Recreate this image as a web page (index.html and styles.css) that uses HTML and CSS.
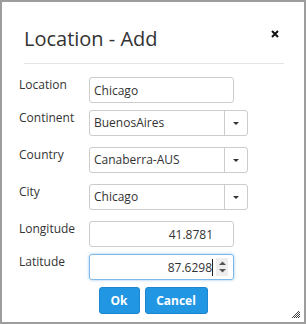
FILE: index.html
```html
<!DOCTYPE html>
<html lang="en">
<head>
<meta charset="UTF-8">
<title>Location - Add</title>
<link rel="stylesheet" href="styles.css">
</head>
<body>

<div class="dialog">
    <div class="dialog-header">
        <div class="dialog-title">Location - Add</div>
        <svg class="close" width="8" height="8" viewBox="0 0 8 8">
            <path d="M1 1 L7 7 M7 1 L1 7" stroke="#111" stroke-width="2"/>
        </svg>
    </div>

    <div class="rows">
        <div class="row">
            <label>Location</label>
            <input class="field" type="text" value="Chicago">
        </div>
        <div class="row row-select">
            <label>Continent</label>
            <div class="combo"><span class="combo-text">BuenosAires</span><span class="combo-btn"><span class="arrow"></span></span></div>
        </div>
        <div class="row row-select">
            <label>Country</label>
            <div class="combo"><span class="combo-text">Canaberra-AUS</span><span class="combo-btn"><span class="arrow"></span></span></div>
        </div>
        <div class="row row-select">
            <label>City</label>
            <div class="combo"><span class="combo-text">Chicago</span><span class="combo-btn"><span class="arrow"></span></span></div>
        </div>
        <div class="row">
            <label>Longitude</label>
            <div class="num"><span class="num-value">41.8781</span></div>
        </div>
        <div class="row">
            <label>Latitude</label>
            <div class="num focus"><span class="num-value">87.6298</span><span class="caret"></span>
                <span class="spinner">
                    <svg width="11" height="16" viewBox="0 0 11 16">
                        <path d="M2 6 L5.5 2.5 L9 6 Z" fill="#555"/>
                        <path d="M2 10 L5.5 13.5 L9 10 Z" fill="#555"/>
                    </svg>
                </span>
            </div>
        </div>
    </div>

    <div class="buttons">
        <button class="btn btn-ok">Ok</button>
        <button class="btn btn-cancel">Cancel</button>
    </div>

    <svg class="grip" width="8" height="8" viewBox="0 0 8 8">
        <rect x="6" y="0" width="1" height="1" fill="#444"/>
        <rect x="5" y="1" width="1" height="1" fill="#444"/>
        <rect x="7" y="1" width="1" height="1" fill="#444"/>
        <rect x="4" y="2" width="1" height="1" fill="#444"/>
        <rect x="6" y="2" width="1" height="1" fill="#444"/>
        <rect x="3" y="3" width="1" height="1" fill="#444"/>
        <rect x="5" y="3" width="1" height="1" fill="#444"/>
        <rect x="7" y="3" width="1" height="1" fill="#444"/>
        <rect x="2" y="4" width="1" height="1" fill="#444"/>
        <rect x="4" y="4" width="1" height="1" fill="#444"/>
        <rect x="6" y="4" width="1" height="1" fill="#444"/>
        <rect x="1" y="5" width="1" height="1" fill="#444"/>
        <rect x="3" y="5" width="1" height="1" fill="#444"/>
        <rect x="5" y="5" width="1" height="1" fill="#444"/>
        <rect x="7" y="5" width="1" height="1" fill="#444"/>
        <rect x="0" y="6" width="1" height="1" fill="#444"/>
        <rect x="2" y="6" width="1" height="1" fill="#444"/>
        <rect x="4" y="6" width="1" height="1" fill="#444"/>
        <rect x="6" y="6" width="1" height="1" fill="#444"/>
    </svg>
</div>

</body>
</html>
```

FILE: styles.css
```css
* {
    box-sizing: border-box;
}

body {
    margin: 0;
    font-family: "Open Sans", "Liberation Sans", sans-serif;
    color: #333;
    background: #fff;
}

.dialog {
    position: relative;
    width: 306px;
    height: 324px;
    border: 2px solid #9d9d9d;
}

.dialog-header {
    display: flex;
    justify-content: space-between;
    align-items: flex-start;
    margin: 0 20px 0 22px;
    padding-top: 23px;
    padding-bottom: 11px;
    border-bottom: 1px solid #e5e5e5;
}

.dialog-title {
    font-size: 20px;
    line-height: 27px;
    color: #333;
}

.close {
    margin-top: 5px;
    margin-right: 5px;
}

.rows {
    padding: 13px 0 0 17px;
}

.row {
    display: flex;
    align-items: flex-start;
    margin-bottom: 7px;
}

.row-select {
    margin-bottom: 11px;
}

.row label {
    width: 70px;
    font-size: 12px;
    line-height: 16px;
    color: #333;
}

.field {
    width: 145px;
    height: 26px;
    margin: 0;
    padding: 0 4px;
    border: 1px solid #ccc;
    border-radius: 3px;
    font-family: "Open Sans", "Liberation Sans", sans-serif;
    font-size: 12px;
    color: #333;
    outline: none;
}

.combo {
    display: flex;
    width: 159px;
    height: 26px;
    border: 1px solid #ccc;
    border-radius: 3px;
    font-size: 12px;
}

.combo-text {
    flex: 1;
    padding-left: 4px;
    line-height: 24px;
}

.combo-btn {
    display: flex;
    align-items: center;
    justify-content: center;
    width: 23px;
    border-left: 1px solid #ccc;
}

.arrow {
    width: 0;
    height: 0;
    border-left: 3px solid transparent;
    border-right: 3px solid transparent;
    border-top: 3px solid #333;
}

.num {
    display: flex;
    align-items: center;
    justify-content: flex-end;
    width: 145px;
    height: 26px;
    padding-right: 20px;
    border: 1px solid #ccc;
    border-radius: 3px;
    font-size: 12px;
}

.num.focus {
    padding-right: 5px;
    border-color: #7fb8e6;
    box-shadow: 0 0 3px rgba(102, 175, 233, 0.7);
}

.caret {
    width: 1px;
    height: 17px;
    background: #222;
}

.spinner {
    display: flex;
    align-items: center;
    justify-content: center;
    width: 12px;
    height: 18px;
    margin-left: 3px;
    background: #eee;
}

.buttons {
    display: flex;
    justify-content: center;
    gap: 5px;
}

.btn {
    height: 27px;
    padding: 0;
    border: 1px solid #1c86d0;
    border-radius: 3px;
    background: #2196e3;
    color: #fff;
    font-family: "Open Sans", "Liberation Sans", sans-serif;
    font-size: 12px;
    font-weight: 700;
}

.btn-ok {
    width: 41px;
}

.btn-cancel {
    width: 63px;
}

.grip {
    position: absolute;
    right: 4px;
    bottom: 3px;
}
```
